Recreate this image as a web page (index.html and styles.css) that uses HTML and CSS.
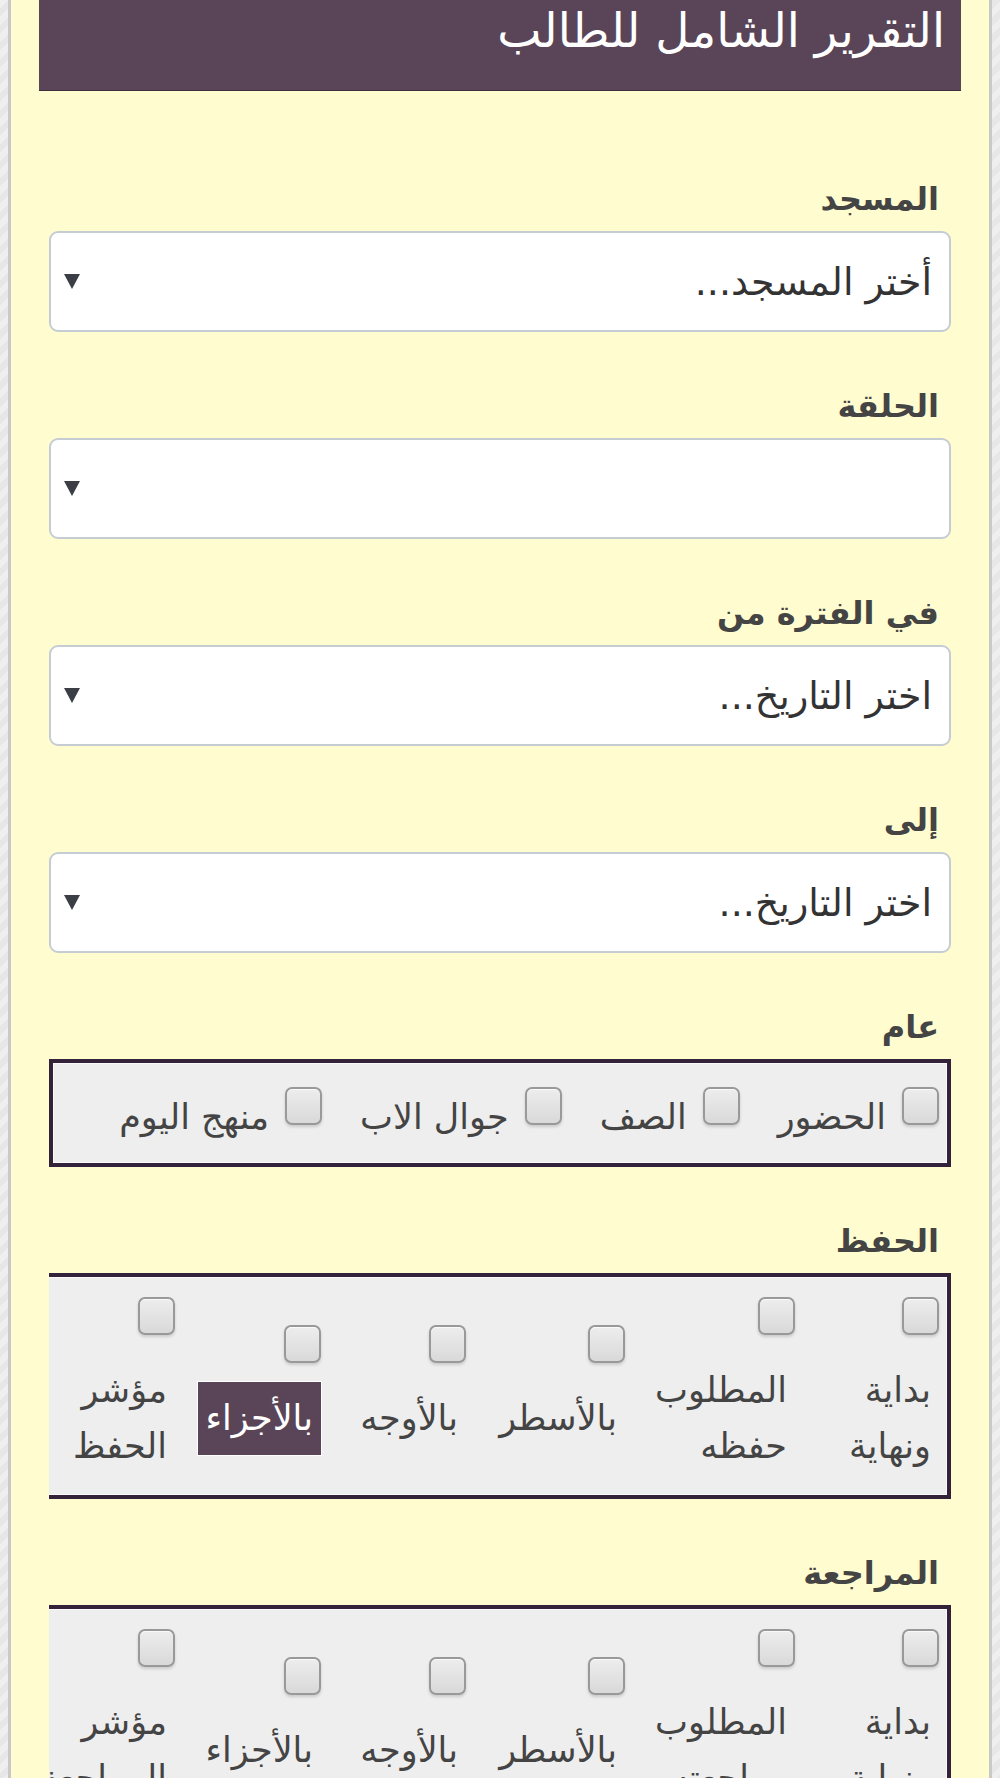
FILE: index.html
```html
<!DOCTYPE html>
<html lang="ar" dir="rtl">
<head>
<meta charset="utf-8">
<title>التقرير الشامل للطالب</title>
<link rel="stylesheet" href="styles.css">
</head>
<body>
<div class="page">
  <div class="header"><h1 class="title">التقرير الشامل للطالب</h1></div>
  <form class="form">
    <div class="field">
      <label class="field-label">المسجد</label>
      <div class="select"><span class="select-text">أختر المسجد...</span><span class="select-arrow"></span></div>
    </div>
    <div class="field">
      <label class="field-label">الحلقة</label>
      <div class="select"><span class="select-text"></span><span class="select-arrow"></span></div>
    </div>
    <div class="field">
      <label class="field-label">في الفترة من</label>
      <div class="select"><span class="select-text">اختر التاريخ...</span><span class="select-arrow"></span></div>
    </div>
    <div class="field">
      <label class="field-label">إلى</label>
      <div class="select"><span class="select-text">اختر التاريخ...</span><span class="select-arrow"></span></div>
    </div>
    <div class="field">
      <label class="field-label">عام</label>
      <div class="box box-inline">
        <label class="opt"><input type="checkbox" class="cb"><span class="opt-text">الحضور</span></label>
        <label class="opt"><input type="checkbox" class="cb"><span class="opt-text">الصف</span></label>
        <label class="opt"><input type="checkbox" class="cb"><span class="opt-text">جوال الاب</span></label>
        <label class="opt"><input type="checkbox" class="cb"><span class="opt-text">منهج اليوم</span></label>
      </div>
    </div>
    <div class="field">
      <label class="field-label">الحفظ</label>
      <div class="grid-wrap">
        <div class="box box-grid">
          <label class="cell c1"><input type="checkbox" class="cb"><span class="cell-text">بداية<br>ونهاية</span></label>
          <label class="cell c2"><input type="checkbox" class="cb"><span class="cell-text">المطلوب<br>حفظه</span></label>
          <label class="cell c3"><input type="checkbox" class="cb"><span class="cell-text">بالأسطر</span></label>
          <label class="cell c4"><input type="checkbox" class="cb"><span class="cell-text">بالأوجه</span></label>
          <label class="cell c5"><input type="checkbox" class="cb"><span class="cell-text active">بالأجزاء</span></label>
          <label class="cell c6"><input type="checkbox" class="cb"><span class="cell-text">مؤشر<br>الحفظ</span></label>
        </div>
      </div>
    </div>
    <div class="field">
      <label class="field-label">المراجعة</label>
      <div class="grid-wrap">
        <div class="box box-grid">
          <label class="cell c1"><input type="checkbox" class="cb"><span class="cell-text">بداية<br>ونهاية</span></label>
          <label class="cell c2"><input type="checkbox" class="cb"><span class="cell-text">المطلوب<br>مراجعته</span></label>
          <label class="cell c3"><input type="checkbox" class="cb"><span class="cell-text">بالأسطر</span></label>
          <label class="cell c4"><input type="checkbox" class="cb"><span class="cell-text">بالأوجه</span></label>
          <label class="cell c5"><input type="checkbox" class="cb"><span class="cell-text">بالأجزاء</span></label>
          <label class="cell c6"><input type="checkbox" class="cb"><span class="cell-text">مؤشر<br>المراجعة</span></label>
        </div>
      </div>
    </div>
  </form>
</div>
</body>
</html>
```

FILE: styles.css
```css
html, body {
  margin: 0;
  padding: 0;
}
body {
  background-color: #ececec;
  background-image: repeating-linear-gradient(135deg, #efefef 0 6px, #e7e7e7 6px 12px);
  font-family: "DejaVu Sans", sans-serif;
  color: #444;
}
.page {
  margin: 0 8px;
  border-left: 3px solid #c9c9c9;
  border-right: 3px solid #c9c9c9;
  background: #fffcd0;
  min-height: 2000px;
  padding: 0 28px;
}
.header {
  background: #5a4558;
  height: 90px;
  border-bottom: 1px solid #3f2f3e;
  padding: 0 16px;
}
.title {
  margin: 0;
  font-size: 47px;
  font-weight: normal;
  color: #fff;
  line-height: 62px;
}
.form {
  padding: 88px 10px 40px 10px;
}
.field {
  margin-bottom: 54px;
}
.field-label {
  display: block;
  font-size: 32px;
  font-weight: bold;
  line-height: 40px;
  color: #444;
  margin-bottom: 12px;
  padding-right: 12px;
}
.select {
  height: 101px;
  box-sizing: border-box;
  border: 2px solid #c6ccd4;
  border-radius: 9px;
  background: #fff;
  display: flex;
  align-items: center;
  justify-content: space-between;
  padding: 0 17px 0 13px;
}
.select-text {
  font-size: 38px;
  color: #333;
}
.select-arrow {
  width: 0;
  height: 0;
  border-left: 8px solid transparent;
  border-right: 8px solid transparent;
  border-top: 15px solid #3b3e45;
}
.box {
  background: #eeeeee;
  border: 4px solid #34223a;
  box-shadow: inset 0 0 0 1px #fafafa;
}
.box-inline {
  display: flex;
  gap: 38px;
  height: 108px;
  box-sizing: border-box;
  padding: 24px 8px 0 8px;
}
.opt {
  display: flex;
  align-items: flex-start;
}
.opt-text {
  margin-top: 10px;
  margin-right: 16px;
  font-size: 35px;
  line-height: 40px;
  color: #444;
}
.cb {
  -webkit-appearance: none;
  appearance: none;
  width: 37px;
  height: 38px;
  margin: 0;
  box-sizing: border-box;
  border: 2px solid #999;
  border-radius: 7px;
  background: linear-gradient(#ededed, #d9d9d9);
  box-shadow: 0 2px 3px rgba(0, 0, 0, 0.15), inset 0 1px 0 #fafafa;
  flex-shrink: 0;
}
.grid-wrap {
  overflow: hidden;
}
.box-grid {
  display: flex;
  align-items: center;
  width: max-content;
  height: 226px;
  box-sizing: border-box;
  padding-top: 7px;
}
.cell {
  flex-shrink: 0;
  display: flex;
  flex-direction: column;
  align-items: flex-start;
  padding-right: 8px;
  box-sizing: border-box;
}
.cell .cb {
  margin-bottom: 19px;
}
.cell-text {
  padding: 8.5px 8px;
  font-size: 35px;
  line-height: 56px;
  color: #444;
  white-space: nowrap;
}
.cell-text.active {
  background: #5a4558;
  color: #fff;
  box-shadow: 0 0 0 1px #fff;
}
.c1 { width: 144px; }
.c2 { width: 170px; }
.c3 { width: 159px; }
.c4 { width: 145px; }
.c5 { width: 146px; }
.c6 { width: 150px; }
```
